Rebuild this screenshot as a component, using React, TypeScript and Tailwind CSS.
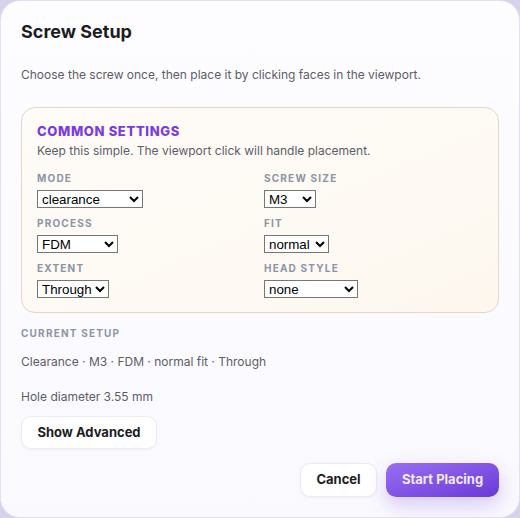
import React from "react";

const labelCls =
	"block text-[10px] font-bold uppercase leading-[14px] tracking-[0.12em] text-[#8b94a5]";
const selectCls =
	"h-[18px] rounded-none border border-[#767676] bg-white text-[13.33px] leading-none text-black [font-family:'Liberation_Sans',Arial,sans-serif]";

interface FieldProps {
	label: string;
	value: string;
	options: string[];
	width: string;
}

const Field: React.FC<FieldProps> = ({ label, value, options, width }) => {
	return (
		<div className="flex flex-col items-start">
			<label className={labelCls}>{label}</label>
			<select
				defaultValue={value}
				className={`${selectCls} ${width} mt-[5px]`}
				style={{ appearance: "auto" }}
			>
				{options.map((o) => (
					<option key={o} value={o}>
						{o}
					</option>
				))}
			</select>
		</div>
	);
};

export default function App() {
	return (
		<div className="h-[518px] w-[520px] bg-[#d6d2ec] [font-family:Inter,'Noto_Sans',sans-serif]">
			<div className="flex h-full flex-col rounded-[20px] border border-[#e4e0f3] bg-gradient-to-b from-[#fdfcff] to-[#faf9fe] px-5 pb-5 pt-[19px]">
				<h2 className="text-[18px] font-bold leading-6 text-[#1c1c22]">
					Screw Setup
				</h2>
				<p className="mt-[22px] text-[12px] leading-[18px] text-[#5d5d68]">
					Choose the screw once, then place it by clicking faces in the viewport.
				</p>

				<div className="mt-[23px] rounded-[14px] border border-[#e6d6c2] bg-gradient-to-br from-[#fefcf9] to-[#fdf7ee] px-[15px] pb-[14px] pt-[15px]">
					<div className="text-[13px] font-extrabold leading-4 tracking-[0.05em] text-[#7a3ae0]">
						COMMON SETTINGS
					</div>
					<p className="mt-[3px] text-[12px] leading-[18px] text-[#5d5d68]">
						Keep this simple. The viewport click will handle placement.
					</p>
					<div className="mt-[11px] grid grid-cols-2 gap-x-2 gap-y-2">
						<Field
							label="Mode"
							value="clearance"
							options={["clearance", "tapped", "heat insert"]}
							width="w-[106px]"
						/>
						<Field
							label="Screw Size"
							value="M3"
							options={["M2", "M3", "M4", "M5"]}
							width="w-[52px]"
						/>
						<Field
							label="Process"
							value="FDM"
							options={["FDM", "SLA", "CNC"]}
							width="w-[81px]"
						/>
						<Field
							label="Fit"
							value="normal"
							options={["tight", "normal", "loose"]}
							width="w-[65px]"
						/>
						<Field
							label="Extent"
							value="Through"
							options={["Through", "Blind"]}
							width="w-[72px]"
						/>
						<Field
							label="Head Style"
							value="none"
							options={["none", "counterbore", "countersink"]}
							width="w-[94px]"
						/>
					</div>
				</div>

				<div className="mt-[13px] text-[10px] font-bold uppercase leading-[14px] tracking-[0.12em] text-[#8b94a5]">
					Current Setup
				</div>
				<p className="mt-[13px] text-[12px] leading-[18px] text-[#5d5d68]">
					Clearance · M3 · FDM · normal fit · Through
				</p>
				<p className="mt-[17px] text-[12px] leading-[18px] text-[#5d5d68]">
					Hole diameter 3.55 mm
				</p>
				<div className="mt-[10px]">
					<button
						type="button"
						className="h-[33px] w-[136px] rounded-[10px] border border-[#ecebf2] bg-white text-[13px] font-bold text-[#1c1c22] shadow-[0_1px_3px_rgba(60,50,120,0.06)]"
					>
						Show Advanced
					</button>
				</div>

				<div className="mt-auto flex justify-end gap-[9px]">
					<button
						type="button"
						className="h-[34px] w-[77px] rounded-[10px] border border-[#ecebf2] bg-white text-[13px] font-bold text-[#1c1c22] shadow-[0_1px_3px_rgba(60,50,120,0.06)]"
					>
						Cancel
					</button>
					<button
						type="button"
						className="h-[34px] w-[113px] rounded-[10px] bg-gradient-to-br from-[#9a6ef0] to-[#6b38d8] text-[13px] font-bold text-[#f1eaff] shadow-[0_8px_20px_rgba(124,77,230,0.28)]"
					>
						Start Placing
					</button>
				</div>
			</div>
		</div>
	);
}
